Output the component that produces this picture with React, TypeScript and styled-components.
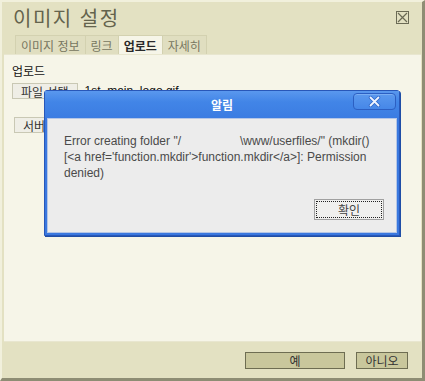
import React from 'react';
import styled, { createGlobalStyle } from 'styled-components';

const GlobalStyle = createGlobalStyle`
  html, body {
    margin: 0;
    padding: 0;
    background: #e3e1c2;
  }
  * {
    box-sizing: border-box;
  }
`;

const KR = `"Liberation Sans", "Noto Sans CJK KR", sans-serif`;

const Window = styled.div`
  position: relative;
  width: 425px;
  height: 381px;
  display: flex;
  flex-direction: column;
  background: #e3e1c2;
  border-top: 2px solid #f1f0dc;
  border-left: 2px solid #f1f0dc;
  border-right: 3px solid #8e8d74;
  border-bottom: 3px solid #8e8d74;
  font-family: ${KR};
`;

const Header = styled.div`
  height: 33px;
  display: flex;
  align-items: center;
  justify-content: space-between;
  padding: 0 13px 0 11px;
`;

const Title = styled.div`
  font-size: 20px;
  color: #64634d;
  letter-spacing: 1.5px;
  margin-top: -2px;
`;

const CloseBox = styled.div`
  width: 13px;
  height: 13px;
  border: 1px solid #6b6a55;
  display: flex;
  align-items: center;
  justify-content: center;
  margin-top: -2px;
`;

const Tabs = styled.div`
  height: 19px;
  display: flex;
  padding-left: 13px;
`;

const Tab = styled.div<{ $active?: boolean }>`
  height: 19px;
  padding: 0 5px;
  display: flex;
  align-items: center;
  font-size: 12px;
  color: ${(p) => (p.$active ? '#2a2a2a' : '#77765f')};
  font-weight: ${(p) => (p.$active ? 700 : 400)};
  background: ${(p) => (p.$active ? '#f6f5e8' : '#e0dec0')};
  border: 1px solid #d3d1b0;
  border-bottom: none;
  margin-right: -1px;
`;

const Panel = styled.div`
  flex: 1;
  margin-right: 1px;
  margin-left: 2px;
  background: #f6f5e8;
  border-top: 1px solid #e8e6cf;
  border-bottom: 1px solid #e8e6cf;
  padding: 10px 8px;
  display: flex;
  flex-direction: column;
  align-items: flex-start;
`;

const Label = styled.div`
  font-size: 12px;
  color: #111;
  line-height: 14px;
`;

const Row = styled.div<{ $gap?: number }>`
  display: flex;
  align-items: center;
  gap: 7px;
  margin-top: ${(p) => p.$gap ?? 4}px;
`;

const SmallButton = styled.div<{ $indent?: number }>`
  height: 16px;
  padding: 0 8px;
  display: flex;
  align-items: center;
  justify-content: center;
  font-size: 12px;
  color: #333;
  background: #efeee6;
  border: 1px solid #c9c8b4;
  margin-left: ${(p) => p.$indent || 0}px;
`;

const FileName = styled.span`
  font-size: 12px;
  color: #111;
`;

const Footer = styled.div`
  height: 36px;
  display: flex;
  align-items: center;
  justify-content: flex-end;
  gap: 11px;
  padding-right: 14px;
`;

const FooterButton = styled.div<{ $w: number }>`
  width: ${(p) => p.$w}px;
  height: 17px;
  display: flex;
  align-items: center;
  justify-content: center;
  font-size: 12px;
  color: #333;
  background: #c9c79c;
  border: 1px solid #6e6d52;
`;

const Modal = styled.div`
  position: absolute;
  left: 42px;
  top: 88px;
  width: 356px;
  height: 146px;
  display: flex;
  flex-direction: column;
  background: #3a78df;
  border: 1px solid #2857b8;
  border-radius: 3px 3px 0 0;
  box-shadow: 1px 1px 0 #1f4ea6;
`;

const ModalBar = styled.div`
  position: relative;
  height: 27px;
  display: flex;
  align-items: center;
  justify-content: center;
  background: linear-gradient(#5a98ee, #4285e7 40%, #3b7ce2);
  color: #fff;
  font-weight: 700;
  font-size: 12px;
`;

const ModalClose = styled.div`
  position: absolute;
  right: 3px;
  top: 2px;
  width: 43px;
  height: 17px;
  border: 1px solid #2c5fc2;
  border-radius: 4px;
  background: linear-gradient(#5b99ee, #4687e8);
  box-shadow: inset 0 1px 0 #7aaef3;
  display: flex;
  align-items: center;
  justify-content: center;
`;

const ModalBody = styled.div`
  flex: 1;
  margin: 0 2px 2px 2px;
  background: #ececec;
  border: 1px solid #b5c6e6;
  display: flex;
  flex-direction: column;
  padding: 14px 16px 0 16px;
`;

const Message = styled.div`
  font-family: "Liberation Sans", sans-serif;
  font-size: 12px;
  line-height: 16px;
  color: #4a4a4a;
  height: 66px;
`;

const Gap = styled.span`
  display: inline-block;
  width: 59px;
`;

const OkButton = styled.div`
  align-self: flex-end;
  width: 70px;
  height: 21px;
  margin-right: -4px;
  display: flex;
  align-items: center;
  justify-content: center;
  font-size: 12px;
  color: #444;
  background: #f0f0ee;
  border: 1px solid #a0a0a0;
  outline: 1px dotted #222;
  outline-offset: -3px;
`;

export default function App() {
  return (
    <>
      <GlobalStyle />
      <Window>
        <Header>
          <Title>이미지 설정</Title>
          <CloseBox>
            <svg width="11" height="11" viewBox="0 0 11 11">
              <path d="M1 1 L10 10 M10 1 L1 10" stroke="#6b6a55" strokeWidth="1.2" />
            </svg>
          </CloseBox>
        </Header>
        <Tabs>
          <Tab>이미지 정보</Tab>
          <Tab>링크</Tab>
          <Tab $active>업로드</Tab>
          <Tab>자세히</Tab>
        </Tabs>
        <Panel>
          <Label>업로드</Label>
          <Row>
            <SmallButton>파일 선택</SmallButton>
            <FileName>1st_main_logo.gif</FileName>
          </Row>
          <Row $gap={18}>
            <SmallButton $indent={2}>서버로 전송</SmallButton>
          </Row>
        </Panel>
        <Footer>
          <FooterButton $w={100}>예</FooterButton>
          <FooterButton $w={52}>아니오</FooterButton>
        </Footer>
        <Modal>
          <ModalBar>
            알림
            <ModalClose>
              <svg width="13" height="11" viewBox="0 0 13 11">
                <path d="M2.5 1.5 L10.5 9.5 M10.5 1.5 L2.5 9.5" stroke="#2f66c9" strokeWidth="3.4" strokeLinecap="round" />
                <path d="M2.5 1.5 L10.5 9.5 M10.5 1.5 L2.5 9.5" stroke="#eef4ff" strokeWidth="1.8" strokeLinecap="round" />
              </svg>
            </ModalClose>
          </ModalBar>
          <ModalBody>
            <Message>
              Error creating folder "/<Gap />\www/userfiles/" (mkdir()
              <br />
              [&lt;a href='function.mkdir'&gt;function.mkdir&lt;/a&gt;]: Permission
              <br />
              denied)
            </Message>
            <OkButton>확인</OkButton>
          </ModalBody>
        </Modal>
      </Window>
    </>
  );
}
